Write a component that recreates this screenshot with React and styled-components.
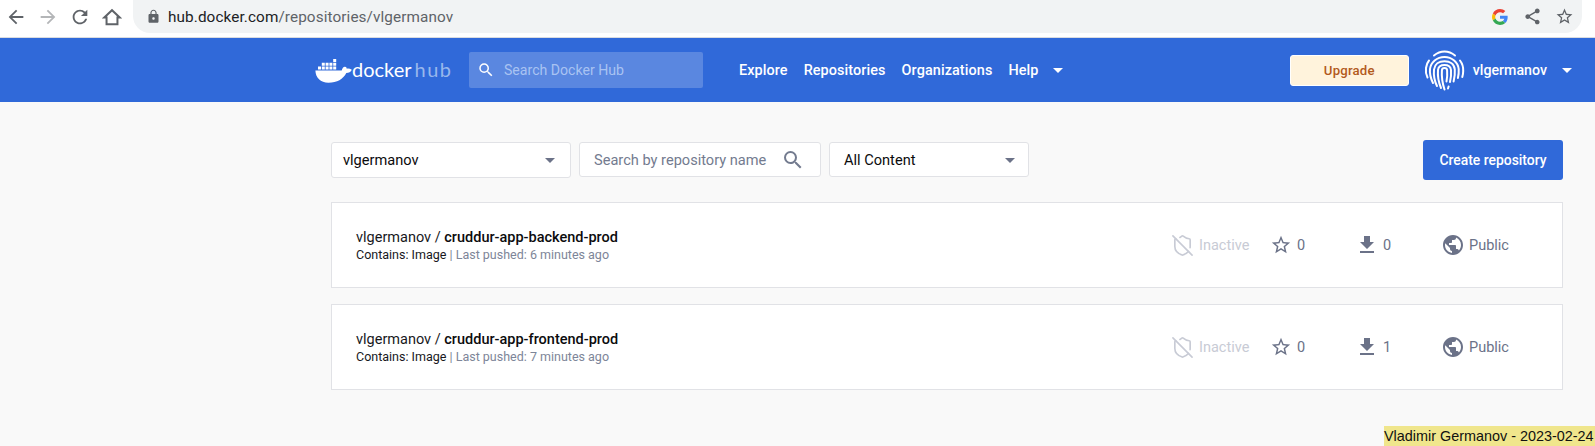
import React from "react";
import styled, { createGlobalStyle } from "styled-components";
import {
  MdArrowBack,
  MdArrowForward,
  MdRefresh,
  MdLock,
  MdShare,
  MdStarBorder,
  MdSearch,
  MdFileDownload,
  MdPublic,
  MdArrowDropDown,
} from "react-icons/md";
import { ShieldOff } from "lucide-react";

const GlobalStyle = createGlobalStyle`
  html, body {
    margin: 0;
    height: 100%;
    overflow: hidden;
    background: #f9f9f9;
    font-family: Roboto, "Liberation Sans", sans-serif;
  }
`;

const Page = styled.div`
  position: relative;
  width: 1595px;
  height: 446px;
  overflow: hidden;
  background: #f9f9f9;
`;

const BrowserBar = styled.div`
  display: flex;
  align-items: flex-start;
  height: 37px;
  background: #fff;
  border-bottom: 1px solid #dadce0;
`;

const NavIcon = styled.span`
  display: flex;
  align-items: center;
  justify-content: center;
  width: 32px;
  height: 33px;
  color: ${(p) => (p.$off ? "#b4b6b8" : "#5f6368")};
  font-size: 22px;
`;

const Omnibox = styled.div`
  display: flex;
  align-items: center;
  width: 1449px;
  height: 33px;
  margin-left: 5px;
  padding: 0 2px 0 13px;
  box-sizing: border-box;
  background: #f1f3f4;
  border-radius: 0 0 17px 17px;
  color: #5f6368;
  font-size: 14px;
`;

const Url = styled.span`
  margin-left: 7px;
  flex: 1;
  font-size: 15.3px;
  letter-spacing: 0.1px;
  b {
    font-weight: 400;
    color: #202124;
  }
`;

const OmniAction = styled.span`
  display: flex;
  align-items: center;
  justify-content: center;
  width: 32px;
  color: #5f6368;
  font-size: 19px;
`;

const TopBar = styled.header`
  display: flex;
  align-items: center;
  height: 64px;
  padding-left: 315px;
  background: #3069d9;
`;

const Logo = styled.div`
  display: flex;
  align-items: center;
  width: 154px;
  color: #fff;
  font-family: Lato, sans-serif;
  font-size: 20px;
  span {
    margin-left: 0;
    line-height: 1;
    padding-bottom: 2px;
  }
  i {
    font-style: normal;
    margin-left: 3px;
    letter-spacing: 1.5px;
    color: #98b7ec;
  }
`;

const HubSearch = styled.div`
  display: flex;
  align-items: center;
  width: 234px;
  height: 36px;
  padding-left: 8px;
  box-sizing: border-box;
  border-radius: 2px;
  background: #5a87e0;
  color: #a9c3f2;
  font-size: 14.1px;
  svg {
    color: #fff;
    font-size: 18px;
    margin-right: 9px;
  }
`;

const NavLinks = styled.nav`
  display: flex;
  align-items: center;
  gap: 16px;
  margin-left: 36px;
  color: #fff;
  font-size: 14.4px;
  font-weight: 500;
  letter-spacing: 0.1px;
`;

const Caret = styled(MdArrowDropDown)`
  flex: none;
  font-size: 24px;
  color: ${(p) => p.$color || "#fff"};
`;

const HelpCaret = styled(Caret)`
  margin-left: -9px;
`;

const UserArea = styled.div`
  display: flex;
  align-items: center;
  margin-left: auto;
  margin-right: 16px;
  color: #fff;
  font-size: 14.2px;
  font-weight: 500;
`;

const UpgradeButton = styled.button`
  width: 119px;
  height: 31px;
  margin-right: 15px;
  padding: 0;
  border: 1px solid #fff;
  border-radius: 3px;
  background: #fff3dc;
  color: #b25a1c;
  font: 500 13.2px Roboto, sans-serif;
  letter-spacing: 0.2px;
`;

const UserName = styled.span`
  margin-left: 8px;
  margin-right: 8px;
`;

const Content = styled.main`
  padding: 38px 32px 0 331px;
`;

const FilterRow = styled.div`
  display: flex;
  align-items: flex-start;
  height: 40px;
  margin-bottom: 22px;
`;

const Field = styled.div`
  display: flex;
  align-items: center;
  justify-content: space-between;
  box-sizing: border-box;
  width: ${(p) => p.$width}px;
  height: ${(p) => p.$height || 36}px;
  margin: 2px 8px 0 0;
  padding: 0 ${(p) => p.$right}px 0 ${(p) => p.$left}px;
  background: #fff;
  border: 1px solid #e1e2e6;
  border-radius: 3px;
  color: ${(p) => (p.$muted ? "#737b8f" : "#0b0b0d")};
  font-size: 14.6px;
`;

const CreateButton = styled.button`
  width: 140px;
  height: 40px;
  margin-left: auto;
  padding: 0;
  border: 0;
  border-radius: 3px;
  background: #3069d9;
  color: #fff;
  font: 500 13.9px Roboto, sans-serif;
`;

const RepoCard = styled.section`
  display: flex;
  align-items: center;
  box-sizing: border-box;
  height: 86px;
  margin-bottom: 16px;
  padding-left: 24px;
  background: #fff;
  border: 1px solid #e1e2e6;
`;

const RepoInfo = styled.div`
  flex: 1;
  padding-top: 2px;
`;

const RepoTitle = styled.div`
  color: #17181c;
  font-size: 14.5px;
  line-height: 17px;
  b {
    font-weight: 500;
    color: #0b0b0d;
  }
`;

const RepoMeta = styled.div`
  color: #7d8598;
  font-size: 12.5px;
  line-height: 17px;
  b {
    font-weight: 400;
    color: #17181c;
  }
`;

const Stat = styled.div`
  display: flex;
  align-items: center;
  width: ${(p) => p.$width}px;
  color: ${(p) => (p.$off ? "#c8cbd5" : "#6b7288")};
  font-size: 14.5px;
  svg {
    flex: none;
    margin-right: ${(p) => p.$gap}px;
  }
`;

const Stamp = styled.div`
  position: absolute;
  right: 0;
  bottom: 0;
  width: 211px;
  height: 20px;
  background: #f0e68c;
  color: #111;
  font: 14.4px/20px "Liberation Sans", Arial, sans-serif;
  white-space: nowrap;
`;

const HomeIcon = () => (
  <svg width="20" height="20" viewBox="0 0 22 22" fill="none" stroke="#5f6368" strokeWidth="2.200">
    <path d="M2.500 11.500 11 3.500l8.500 8H17v7.500H5v-7.500z" strokeLinejoin="miter" />
  </svg>
);

const Whale = () => (
  <svg width="37" height="25" viewBox="0 0 37 25" fill="#fff">
    <path d="M.4 12.600h26.300c.6-2.500 1.800-4 3.400-3.800 1 .1 1.500.8 1.700 1.900 1.500-.5 3.300-.1 5 1-1 2.200-3 3.200-5.500 3.300C28.200 21 22 24.800 13.500 24.800 5.500 24.800.6 19.800.4 12.600z" />
    <path d="M3 8.500h3v3H3zM6.800 8.500h3v3h-3zM10.600 8.500h3v3h-3zM14.400 8.500h3v3h-3zM18.200 8.500h3v3h-3zM6.800 4.800h3v3h-3zM10.600 4.800h3v3h-3zM14.400 4.800h3v3h-3zM18.200 4.800h3v3h-3zM18.200 1h3v3h-3z" />
  </svg>
);

const Fingerprint = () => (
  <svg width="41" height="41" viewBox="0 0 41 41" fill="none" stroke="#fff" strokeWidth="2" strokeLinecap="round">
    <path d="M10 5.500C13 3 16.500 1.500 20.500 1.500S28 3 31 5.500" />
    <path d="M3.500 27.500C2 24.500 1.500 21.500 2 18c.4-3 1.300-5.500 3-7.500" />
    <path d="M36 10.500c2.300 3 3.400 6.500 3.200 10.500 0 2-.3 4-.9 6" />
    <path d="M9 33C6.500 28 5.500 23.500 6 19c.8-6.500 6.800-12 14.500-12 7.500 0 13.500 5.500 14.200 12 .2 3-.1 6-.8 9" />
    <path d="M13 36c-2.500-5-3.500-11-3-16.500.6-5.300 5-8.300 10.500-8.300s9.800 3 10.300 8.300c.3 4-.2 8-1.200 12" />
    <path d="M17 38c-2.300-5.500-3.500-12-3-18 .4-3.300 3-5 6.500-5s6.100 1.700 6.500 5c.3 4 0 8-1 12" />
    <path d="M20.500 39.500c-2-6-3-13-2.600-19 .1-1.500 1.200-2.400 2.600-2.400s2.500.9 2.600 2.400c.3 4 .1 7.500-.6 11" />
    <path d="M24 38.500l.6-2" />
  </svg>
);

const GoogleG = () => (
  <svg width="16" height="16" viewBox="0 0 48 48">
    <path fill="#ea4335" d="M24 9.500c3.500 0 6.700 1.300 9.200 3.400l6.800-6.800C35.900 2.400 30.200 0 24 0 14.600 0 6.500 5.400 2.600 13.200l7.900 6.100C12.400 13.600 17.700 9.500 24 9.500z" />
    <path fill="#4285f4" d="M47 24.500c0-1.600-.1-3.100-.4-4.500H24v9h12.900c-.6 3-2.200 5.500-4.700 7.200l7.600 5.900C44.200 38 47 31.900 47 24.500z" />
    <path fill="#fbbc05" d="M10.500 28.700c-.5-1.400-.8-3-.8-4.700s.3-3.300.8-4.700l-7.900-6.100C.9 16.500 0 20.100 0 24s.9 7.500 2.600 10.800l7.900-6.100z" />
    <path fill="#34a853" d="M24 48c6.200 0 11.500-2 15.800-5.900l-7.600-5.900c-2.100 1.400-4.900 2.300-8.200 2.300-6.300 0-11.600-4.100-13.500-9.800l-7.900 6.100C6.500 42.600 14.600 48 24 48z" />
  </svg>
);

const repos = [
  { name: "cruddur-app-backend-prod", pushed: "6 minutes ago", pulls: 0 },
  { name: "cruddur-app-frontend-prod", pushed: "7 minutes ago", pulls: 1 },
];

const App = () => {
  return (
    <Page>
      <GlobalStyle />
      <BrowserBar>
        <NavIcon><MdArrowBack /></NavIcon>
        <NavIcon $off><MdArrowForward /></NavIcon>
        <NavIcon><MdRefresh /></NavIcon>
        <NavIcon><HomeIcon /></NavIcon>
        <Omnibox>
          <MdLock size={15} />
          <Url><b>hub.docker.com</b>/repositories/vlgermanov</Url>
          <OmniAction><GoogleG /></OmniAction>
          <OmniAction><MdShare /></OmniAction>
          <OmniAction><MdStarBorder /></OmniAction>
        </Omnibox>
      </BrowserBar>

      <TopBar>
        <Logo>
          <Whale />
          <span>docker<i>hub</i></span>
        </Logo>
        <HubSearch>
          <MdSearch />
          Search Docker Hub
        </HubSearch>
        <NavLinks>
          <span>Explore</span>
          <span>Repositories</span>
          <span>Organizations</span>
          <span>Help</span>
          <HelpCaret />
        </NavLinks>
        <UserArea>
          <UpgradeButton>Upgrade</UpgradeButton>
          <Fingerprint />
          <UserName>vlgermanov</UserName>
          <Caret />
        </UserArea>
      </TopBar>

      <Content>
        <FilterRow>
          <Field $width={240} $left={11} $right={8}>
            vlgermanov
            <Caret $color="#6b7288" />
          </Field>
          <Field $width={242} $height={35} $left={14} $right={15} $muted>
            Search by repository name
            <MdSearch size={24} />
          </Field>
          <Field $width={200} $height={35} $left={14} $right={6}>
            All Content
            <Caret $color="#6b7288" />
          </Field>
          <CreateButton>Create repository</CreateButton>
        </FilterRow>

        {repos.map((repo) => (
          <RepoCard key={repo.name}>
            <RepoInfo>
              <RepoTitle>vlgermanov / <b>{repo.name}</b></RepoTitle>
              <RepoMeta><b>Contains: Image</b> | Last pushed: {repo.pushed}</RepoMeta>
            </RepoInfo>
            <Stat $off $width={99} $gap={5}>
              <ShieldOff size={23} strokeWidth={1.7} />
              Inactive
            </Stat>
            <Stat $width={85} $gap={5}>
              <MdStarBorder size={22} />
              0
            </Stat>
            <Stat $width={86} $gap={4}>
              <MdFileDownload size={24} />
              {repo.pulls}
            </Stat>
            <Stat $width={121} $gap={4}>
              <MdPublic size={24} />
              Public
            </Stat>
          </RepoCard>
        ))}
      </Content>
      <Stamp>Vladimir Germanov - 2023-02-24</Stamp>
    </Page>
  );
};

export default App;
